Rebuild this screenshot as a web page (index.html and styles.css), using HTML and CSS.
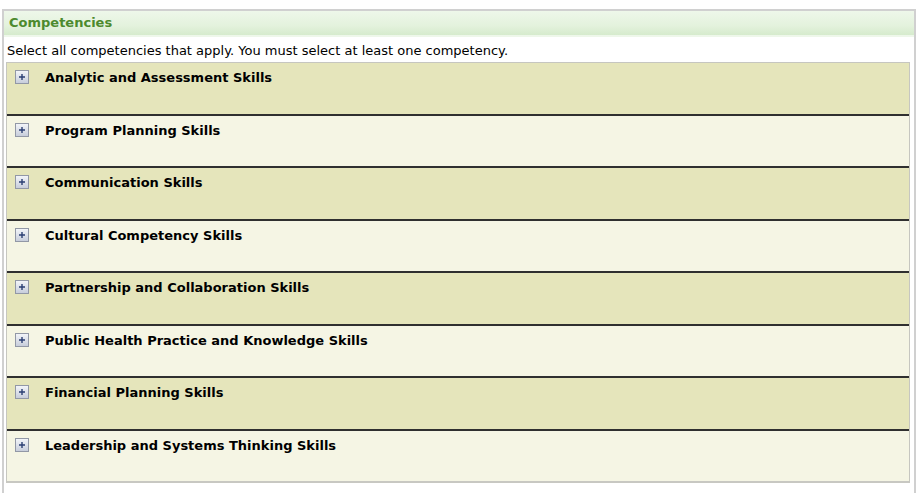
FILE: index.html
```html
<!DOCTYPE html>
<html lang="en">
<head>
<meta charset="utf-8">
<title>Competencies</title>
<link rel="stylesheet" href="styles.css">
</head>
<body>
<div class="panel">
  <div class="panel-header">Competencies</div>
  <div class="desc">Select all competencies that apply. You must select at least one competency.</div>
  <div class="accordion">
    <div class="row odd"><span class="toggle"><svg width="14" height="14" viewBox="0 0 14 14"><defs><linearGradient id="g" x1="0" y1="0" x2="0" y2="1"><stop offset="0" stop-color="#f4f6fa"/><stop offset="1" stop-color="#c6ccda"/></linearGradient></defs><rect x="0.5" y="0.5" width="13" height="13" fill="url(#g)" stroke="#9298a6"/><path d="M4 7h6M7 4v6" stroke="#2b3f73" stroke-width="1.4"/></svg></span><span class="label">Analytic and Assessment Skills</span></div>
    <div class="row even"><span class="toggle"><svg width="14" height="14" viewBox="0 0 14 14"><rect x="0.5" y="0.5" width="13" height="13" fill="url(#g)" stroke="#9298a6"/><path d="M4 7h6M7 4v6" stroke="#2b3f73" stroke-width="1.4"/></svg></span><span class="label">Program Planning Skills</span></div>
    <div class="row odd"><span class="toggle"><svg width="14" height="14" viewBox="0 0 14 14"><rect x="0.5" y="0.5" width="13" height="13" fill="url(#g)" stroke="#9298a6"/><path d="M4 7h6M7 4v6" stroke="#2b3f73" stroke-width="1.4"/></svg></span><span class="label">Communication Skills</span></div>
    <div class="row even"><span class="toggle"><svg width="14" height="14" viewBox="0 0 14 14"><rect x="0.5" y="0.5" width="13" height="13" fill="url(#g)" stroke="#9298a6"/><path d="M4 7h6M7 4v6" stroke="#2b3f73" stroke-width="1.4"/></svg></span><span class="label">Cultural Competency Skills</span></div>
    <div class="row odd"><span class="toggle"><svg width="14" height="14" viewBox="0 0 14 14"><rect x="0.5" y="0.5" width="13" height="13" fill="url(#g)" stroke="#9298a6"/><path d="M4 7h6M7 4v6" stroke="#2b3f73" stroke-width="1.4"/></svg></span><span class="label">Partnership and Collaboration Skills</span></div>
    <div class="row even"><span class="toggle"><svg width="14" height="14" viewBox="0 0 14 14"><rect x="0.5" y="0.5" width="13" height="13" fill="url(#g)" stroke="#9298a6"/><path d="M4 7h6M7 4v6" stroke="#2b3f73" stroke-width="1.4"/></svg></span><span class="label">Public Health Practice and Knowledge Skills</span></div>
    <div class="row odd"><span class="toggle"><svg width="14" height="14" viewBox="0 0 14 14"><rect x="0.5" y="0.5" width="13" height="13" fill="url(#g)" stroke="#9298a6"/><path d="M4 7h6M7 4v6" stroke="#2b3f73" stroke-width="1.4"/></svg></span><span class="label">Financial Planning Skills</span></div>
    <div class="row even last"><span class="toggle"><svg width="14" height="14" viewBox="0 0 14 14"><rect x="0.5" y="0.5" width="13" height="13" fill="url(#g)" stroke="#9298a6"/><path d="M4 7h6M7 4v6" stroke="#2b3f73" stroke-width="1.4"/></svg></span><span class="label">Leadership and Systems Thinking Skills</span></div>
  </div>
</div>
</body>
</html>
```
FILE: styles.css
```css
html, body {
  margin: 0;
  padding: 0;
  background: #ffffff;
}
body {
  padding: 9px 0 0 2px;
  font-family: "DejaVu Sans", Verdana, sans-serif;
  font-size: 13px;
  color: #000;
  height: 484px;
  overflow: hidden;
}
.panel {
  width: 910px;
  height: 500px;
  border: 2px solid #d0d0d0;
  border-bottom: none;
  box-sizing: content-box;
}
.panel-header {
  height: 24px;
  line-height: 24px;
  padding-left: 5px;
  font-weight: bold;
  font-size: 13px;
  color: #4d8a2e;
  background: linear-gradient(to bottom, #eef7ea 0%, #e4f2dd 60%, #d6ebcd 100%);
  border-bottom: 2px solid #eef7ea;
}
.desc {
  padding: 6px 0 0 3px;
  height: 19px;
  line-height: 16px;
}
.accordion {
  margin: 0 4px 0 2px;
  border: 1px solid #c6c6c0;
  border-bottom: 2px solid #c8c8c2;
}
.row {
  display: flex;
  align-items: flex-start;
  height: 50.5px;
  border-bottom: 2px solid #2f2f2f;
  padding-left: 8px;
}
.row.last {
  border-bottom: none;
}
.odd {
  background: #e5e5bb;
}
.even {
  background: #f5f5e4;
}
.toggle {
  display: flex;
  margin-top: 7px;
  width: 14px;
  height: 14px;
}
.label {
  margin-left: 16px;
  margin-top: 7px;
  font-weight: bold;
  font-size: 13px;
  line-height: 16px;
}
```
